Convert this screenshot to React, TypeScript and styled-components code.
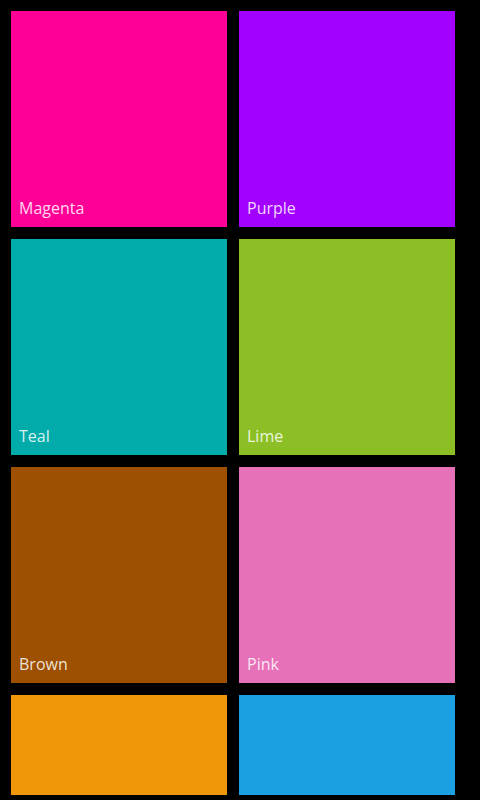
import React from "react";
import styled, { createGlobalStyle } from "styled-components";

const Global = createGlobalStyle`
  html, body { margin: 0; padding: 0; background: #000; }
  body { font-family: "Open Sans", "Noto Sans", sans-serif; }
`;

const Page = styled.div`
  width: 480px;
  height: 800px;
  background: #000;
  box-sizing: border-box;
  padding: 11px 25px 5px 11px;
`;

const Viewport = styled.div`
  height: 784px;
  overflow: hidden;
`;

const Grid = styled.div`
  display: grid;
  grid-template-columns: 216px 216px;
  grid-auto-rows: 216px;
  gap: 12px;
`;

const Tile = styled.div<{ $bg: string }>`
  background: ${(p) => p.$bg};
  display: flex;
  align-items: flex-end;
  padding: 0 8px 8px;
`;

const Label = styled.span`
  color: rgba(255, 255, 255, 0.85);
  font-size: 16px;
  line-height: 22px;
`;

const colors: [string, string][] = [
  ["Magenta", "#FF0097"],
  ["Purple", "#A200FF"],
  ["Teal", "#00ABA9"],
  ["Lime", "#8CBF26"],
  ["Brown", "#9C5000"],
  ["Pink", "#E671B8"],
  ["Orange", "#F09609"],
  ["Blue", "#1BA1E2"],
];

export default function App() {
  return (
    <>
      <Global />
      <Page>
        <Viewport>
          <Grid>
            {colors.map(([name, bg]) => (
              <Tile key={name} $bg={bg}>
                <Label>{name}</Label>
              </Tile>
            ))}
          </Grid>
        </Viewport>
      </Page>
    </>
  );
}
